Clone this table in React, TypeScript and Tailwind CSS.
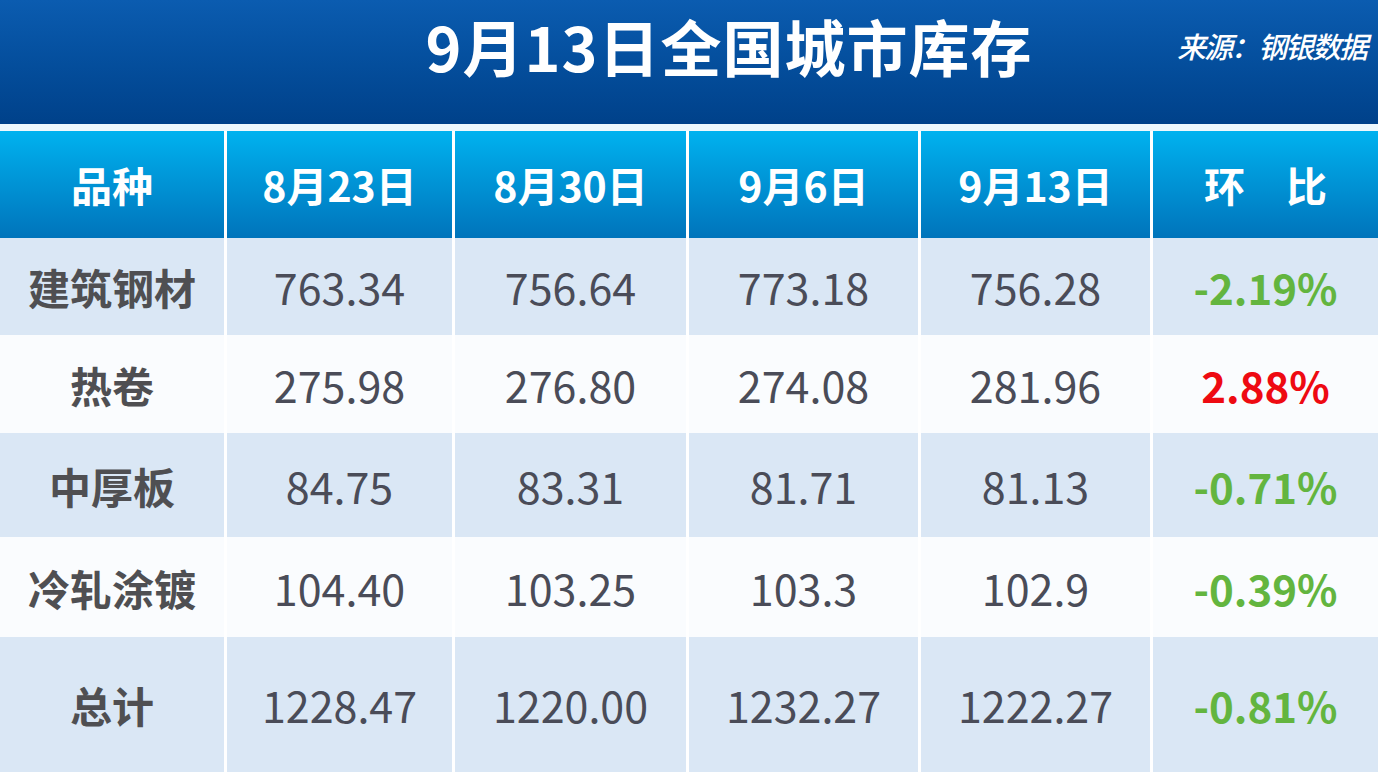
const cols = 'grid grid-cols-[224px_228px_234px_232px_232px_1fr]'

const heads = ['品种', '8月23日', '8月30日', '9月6日', '9月13日', '环\u3000比']

type Row = { name: string; vals: string[]; pct: string; up?: boolean; h: string; bg: string }

const rows: Row[] = [
  { name: '建筑钢材', vals: ['763.34', '756.64', '773.18', '756.28'], pct: '-2.19%', h: 'h-[97px]', bg: 'bg-[#dae7f5]' },
  { name: '热卷', vals: ['275.98', '276.80', '274.08', '281.96'], pct: '2.88%', up: true, h: 'h-[98px]', bg: 'bg-[#fafcfe]' },
  { name: '中厚板', vals: ['84.75', '83.31', '81.71', '81.13'], pct: '-0.71%', h: 'h-[104px]', bg: 'bg-[#dae7f5]' },
  { name: '冷轧涂镀', vals: ['104.40', '103.25', '103.3', '102.9'], pct: '-0.39%', h: 'h-[100px]', bg: 'bg-[#fafcfe]' },
  { name: '总计', vals: ['1228.47', '1220.00', '1232.27', '1222.27'], pct: '-0.81%', h: 'h-[135px]', bg: 'bg-[#dae7f5]' },
]

const cjk = "font-['Noto_Sans_CJK_SC',sans-serif]"

export default function App() {
  return (
    <div className={`w-[1378px] h-[772px] overflow-hidden bg-white ${cjk}`}>
      <div className="relative h-[124px] bg-gradient-to-b from-[#0b5cb0] to-[#00418a] flex items-center justify-center">
        <h1 className="text-white font-bold text-[61px] leading-none tracking-[1px] ml-[80px] mt-[-34px]">9月13日全国城市库存</h1>
        <span className="absolute right-[12px] top-[24px] text-white italic font-medium text-[29px] tracking-[-2px]">来源：钢银数据</span>
      </div>
      <div className="h-[7px] bg-[#eef8fd]" />
      <div className={`${cols} h-[107px] bg-gradient-to-b from-[#00b2ef] to-[#0074bb]`}>
        {heads.map((h, i) => (
          <div key={h} className={`flex items-center justify-center text-white font-bold text-[41px] ${i > 0 ? 'border-l-[3px] border-white' : ''}`}>
            {h}
          </div>
        ))}
      </div>
      {rows.map(r => (
        <div key={r.name} className={`${cols} ${r.h} ${r.bg}`}>
          <div className="flex items-center justify-center text-[#4f4f52] font-bold text-[42px]">{r.name}</div>
          {r.vals.map((v, i) => (
            <div key={i} className="flex items-center justify-center border-l-[3px] border-white text-[#4a4c58] text-[43px]">
              {v}
            </div>
          ))}
          <div className={`flex items-center justify-center border-l-[3px] border-white font-bold text-[42px] ${r.up ? 'text-[#ee0a12]' : 'text-[#63b53f]'}`}>
            {r.pct}
          </div>
        </div>
      ))}
    </div>
  )
}
